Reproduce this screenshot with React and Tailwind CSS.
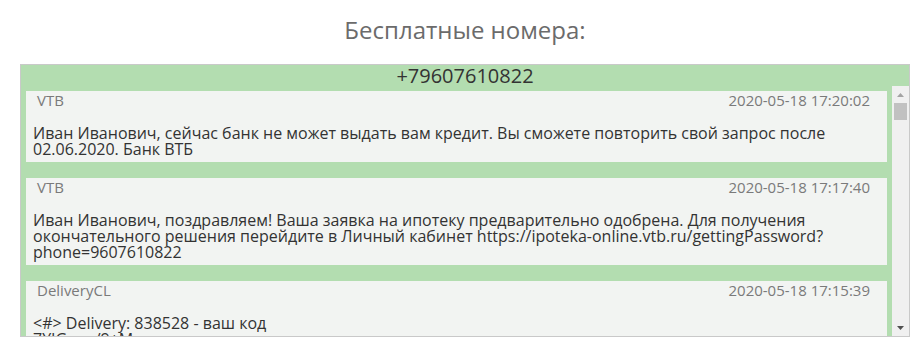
import React from "react";

const messages = [
  {
    from: "VTB",
    date: "2020-05-18 17:20:02",
    text: "Иван Иванович, сейчас банк не может выдать вам кредит. Вы сможете повторить свой запрос после 02.06.2020. Банк ВТБ",
  },
  {
    from: "VTB",
    date: "2020-05-18 17:17:40",
    text: "Иван Иванович, поздравляем! Ваша заявка на ипотеку предварительно одобрена. Для получения окончательного решения перейдите в Личный кабинет https://ipoteka-online.vtb.ru/gettingPassword?phone=9607610822",
  },
  {
    from: "DeliveryCL",
    date: "2020-05-18 17:15:39",
    text: "<#> Delivery: 838528 - ваш код\n7YIGuyo/9+M",
  },
];

export default function App() {
  return (
    <div className="w-[920px] h-[352px] bg-white overflow-hidden" style={{ fontFamily: '"Open Sans", sans-serif' }}>
      <div className="ml-[20px] w-[890px]">
        <h1 className="text-center text-[24px] leading-[32px] pt-[14px] text-[#6b6b6b] font-normal">
          Бесплатные номера:
        </h1>
        <div className="mt-[18px] border border-[#c9c9c9] bg-[#b3ddb0] h-[273px] flex flex-col">
          <div className="h-[21px] text-center text-[20px] leading-[21px] text-[#333]">+79607610822</div>
          <div className="flex-1 flex min-h-0">
            <div className="flex-1 overflow-hidden pt-[5px] px-[5px] flex flex-col gap-[16px]">
              {messages.map((m, i) => (
                <div key={i} className="bg-[#f2f4f2] pl-[7px] pr-[17px] pb-[5px] shrink-0">
                  <div className="flex justify-between text-[15px] leading-[18px] text-[#7a7a7a]">
                    <span className="pl-[4px]">{m.from}</span>
                    <span>{m.date}</span>
                  </div>
                  <div className="mt-[16px] text-[16px] leading-[16px] text-[#333] whitespace-pre-line break-words">
                    {m.text}
                  </div>
                </div>
              ))}
            </div>
            <div className="w-[17px] bg-[#f0f0f0] flex flex-col">
              <div className="h-[17px] flex items-center justify-center">
                <svg width="7" height="4" viewBox="0 0 7 4"><path d="M3.5 0L7 4H0z" fill="#a3a3a3" /></svg>
              </div>
              <div className="mx-[2px] h-[17px] bg-[#c1c1c1]" />
              <div className="flex-1" />
              <div className="h-[17px] flex items-center justify-center">
                <svg width="7" height="4" viewBox="0 0 7 4"><path d="M0 0H7L3.5 4z" fill="#505050" /></svg>
              </div>
            </div>
          </div>
        </div>
      </div>
    </div>
  );
}
